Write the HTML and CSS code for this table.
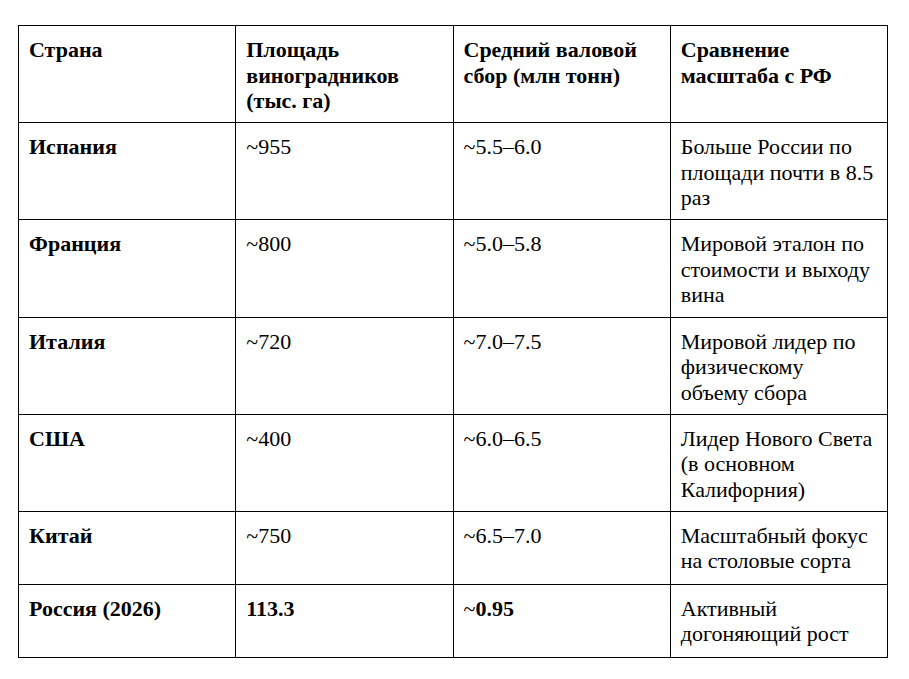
FILE: index.html
```html
<!DOCTYPE html>
<html>
<head>
<meta charset="utf-8">
<title>Сравнение виноградников</title>
<link rel="stylesheet" href="styles.css">
</head>
<body>
<table class="grid">
  <colgroup>
    <col class="c"><col class="c"><col class="c"><col class="c">
  </colgroup>
  <thead>
    <tr>
      <th>Страна</th>
      <th>Площадь виноградников (тыс. га)</th>
      <th>Средний валовой сбор (млн тонн)</th>
      <th>Сравнение масштаба с РФ</th>
    </tr>
  </thead>
  <tbody>
    <tr>
      <td class="name">Испания</td>
      <td>~955</td>
      <td>~5.5–6.0</td>
      <td>Больше России по площади почти в 8.5 раз</td>
    </tr>
    <tr>
      <td class="name">Франция</td>
      <td>~800</td>
      <td>~5.0–5.8</td>
      <td>Мировой эталон по стоимости и выходу вина</td>
    </tr>
    <tr>
      <td class="name">Италия</td>
      <td>~720</td>
      <td>~7.0–7.5</td>
      <td>Мировой лидер по физическому объему сбора</td>
    </tr>
    <tr>
      <td class="name">США</td>
      <td>~400</td>
      <td>~6.0–6.5</td>
      <td>Лидер Нового Света (в основном Калифорния)</td>
    </tr>
    <tr class="two">
      <td class="name">Китай</td>
      <td>~750</td>
      <td>~6.5–7.0</td>
      <td>Масштабный фокус на столовые сорта</td>
    </tr>
    <tr class="two">
      <td class="name">Россия (2026)</td>
      <td class="strong">113.3</td>
      <td>~<b class="strong">0.95</b></td>
      <td>Активный догоняющий рост</td>
    </tr>
  </tbody>
</table>
</body>
</html>
```

FILE: styles.css
```css
html, body {
  margin: 0;
  padding: 0;
  background: #ffffff;
}

body {
  padding: 25px 0 0 18px;
  font-family: "Liberation Serif", serif;
  font-size: 22px;
  line-height: 25.5px;
  color: #000000;
}

.grid {
  border-collapse: collapse;
  table-layout: fixed;
  width: 870px;
  font-family: "Liberation Serif", serif;
}

.grid .c {
  width: 217px;
}

.grid th,
.grid td {
  border: 1px solid #000000;
  padding: 11px 12px 8.7px 10px;
  text-align: left;
  vertical-align: top;
  font-family: "Liberation Serif", serif;
  font-size: 22px;
  line-height: 25.5px;
  font-weight: normal;
}

.grid .two td {
  padding-bottom: 10px;
}

.grid th,
.grid .name,
.grid .strong {
  font-weight: bold;
}
```
